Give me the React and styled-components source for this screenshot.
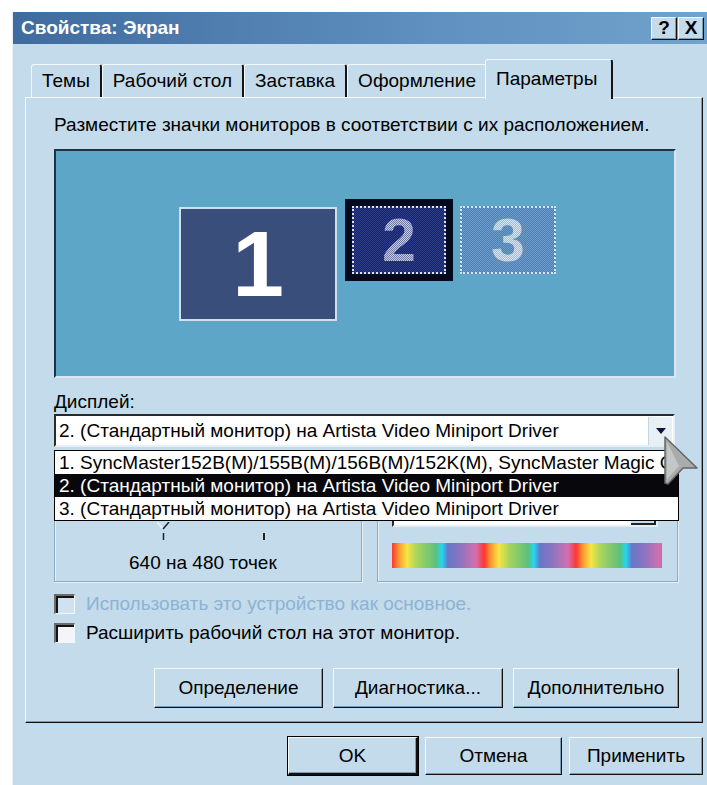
import React from 'react'
import styled, { createGlobalStyle } from 'styled-components'

const GlobalStyle = createGlobalStyle`
  html, body {
    margin: 0;
    padding: 0;
    background: #fff;
    overflow: hidden;
  }
  body {
    font-family: "Liberation Sans", Arial, sans-serif;
    font-size: 19px;
    color: #000;
  }
`

const tabs = ['Темы', 'Рабочий стол', 'Заставка', 'Оформление', 'Параметры']

const displays = [
  '1. SyncMaster152B(M)/155B(M)/156B(M)/152K(M), SyncMaster Magic CX700',
  '2. (Стандартный монитор) на Artista Video Miniport Driver',
  '3. (Стандартный монитор) на Artista Video Miniport Driver',
]

const App = () => {
  return (
    <Page>
      <GlobalStyle />
      <Window>
        <TitleBar>
          <Title>Свойства: Экран</Title>
          <TitleButton>?</TitleButton>
          <TitleButton>X</TitleButton>
        </TitleBar>

        <Body>
          <TabRow>
            {tabs.map((t, i) => (
              <Tab key={t} active={i === tabs.length - 1}>{t}</Tab>
            ))}
          </TabRow>

          <Panel>
            <Hint>Разместите значки мониторов в соответствии с их расположением.</Hint>

            <MonitorArea>
              <Monitor1>1</Monitor1>
              <Monitor2>
                <Monitor2Inner>
                  <DitherDigit light="#c4ccdc" dark="#6e7aa0">2</DitherDigit>
                </Monitor2Inner>
              </Monitor2>
              <Monitor3>
                <DitherDigit light="#d8e6f4" dark="#9dbbd9">3</DitherDigit>
              </Monitor3>
            </MonitorArea>

            <Label>Дисплей:</Label>
            <ComboWrap>
              <Combo>
                <ComboText>2. (Стандартный монитор) на Artista Video Miniport Driver</ComboText>
                <ComboButton>
                  <Arrow />
                </ComboButton>
              </Combo>

              <DropList>
                {displays.map((d, i) => (
                  <DropItem key={i} selected={i === 1}>{d}</DropItem>
                ))}
              </DropList>

              <Cursor width="40" height="52" viewBox="0 0 40 52">
                <path
                  d="M2 2 L34 33 L20 33 L5 49 L2 48 Z"
                  fill="#a9acac"
                  stroke="#666"
                  strokeWidth="1.5"
                  strokeLinejoin="round"
                />
                <path d="M4 7 L4 44 L16 31 Z" fill="#c4c7c7" />
              </Cursor>
            </ComboWrap>

            <Groups>
              <GroupBox>
                <SliderTicks>
                  <svg width="16" height="18" viewBox="0 0 16 18">
                    <path d="M1 0 L7 7" stroke="#eef5fa" strokeWidth="1.5" />
                    <path d="M13 0 L7 7" stroke="#222" strokeWidth="1.5" />
                    <path d="M7.5 11 V18" stroke="#222" strokeWidth="1.5" />
                  </svg>
                  <Tick />
                </SliderTicks>
                <Resolution>640 на 480 точек</Resolution>
              </GroupBox>

              <GroupBox>
                <ColorCombo>
                  <ColorComboButton />
                </ColorCombo>
                <ColorBar />
              </GroupBox>
            </Groups>

            <CheckRow disabled>
              <Checkbox disabled />
              Использовать это устройство как основное.
            </CheckRow>
            <CheckRow>
              <Checkbox />
              Расширить рабочий стол на этот монитор.
            </CheckRow>

            <ButtonRow>
              <Button w={169}>Определение</Button>
              <Button w={170}>Диагностика...</Button>
              <Button w={166}>Дополнительно</Button>
            </ButtonRow>
          </Panel>

          <DialogButtons>
            <Button w={130} h={38} primary>OK</Button>
            <Button w={137} h={38}>Отмена</Button>
            <Button w={134} h={38}>Применить</Button>
          </DialogButtons>
        </Body>
      </Window>
    </Page>
  )
}

export default App

const bg = '#c3dbea'

const Page = styled.div`
  width: 707px;
  height: 785px;
  overflow: hidden;
  padding: 12px 0 0 12px;
  box-sizing: border-box;
`

const Window = styled.div`
  width: 698px;
  height: 800px;
  background: ${bg};
  border-left: 1px solid #e4eff7;
  box-sizing: border-box;
  display: flex;
  flex-direction: column;
`

const TitleBar = styled.div`
  height: 32px;
  flex-shrink: 0;
  display: flex;
  align-items: center;
  gap: 1px;
  padding: 0 6px 0 8px;
  background: linear-gradient(to right, #3f6b9f, #5f90bf 60%, #72a3cd);
`

const Title = styled.div`
  flex: 1;
  color: #fff;
  font-weight: bold;
  font-size: 19px;
`

const raised = `
  border-top: 1px solid #f4f9fc;
  border-left: 1px solid #f4f9fc;
  border-right: 1px solid #111;
  border-bottom: 1px solid #111;
  box-shadow: inset -1px -1px 0 #7d9bb0;
`

const TitleButton = styled.div`
  width: 26px;
  height: 23px;
  box-sizing: border-box;
  ${raised}
  background: ${bg};
  display: flex;
  align-items: center;
  justify-content: center;
  font-weight: bold;
  font-size: 19px;
`

const Body = styled.div`
  display: flex;
  flex-direction: column;
  padding: 0 7px 0 12px;
`

const TabRow = styled.div`
  display: flex;
  align-items: flex-end;
  height: 38px;
  margin-top: 15px;
  padding-left: 6px;
  position: relative;
  z-index: 1;
`

const Tab = styled.div`
  height: ${({ active }) => (active ? '40px' : '33px')};
  box-sizing: border-box;
  display: flex;
  align-items: center;
  padding: ${({ active }) => (active ? '0 14px 2px 10px' : '0 10px')};
  margin: ${({ active }) => (active ? '0 0 -2px -3px' : '0')};
  background: ${bg};
  border-top: 1px solid #f2f8fb;
  border-left: 1px solid #f2f8fb;
  border-right: 2px solid #151515;
  border-radius: 3px 3px 0 0;
  position: relative;
  z-index: ${({ active }) => (active ? 2 : 0)};
  white-space: nowrap;
`

const Panel = styled.div`
  height: 626px;
  box-sizing: border-box;
  display: flex;
  flex-direction: column;
  padding: 16px 26px 0 28px;
  border-top: 1px solid #f2f8fb;
  border-left: 1px solid #f2f8fb;
  border-right: 1px solid #0e0e0e;
  border-bottom: 1px solid #0e0e0e;
  box-shadow: inset -1px -1px 0 #7d9bb0;
`

const Hint = styled.div`
  line-height: 22px;
  height: 22px;
  white-space: nowrap;
`

const MonitorArea = styled.div`
  position: relative;
  margin-top: 13px;
  height: 229px;
  box-sizing: border-box;
  background: #5ea6c7;
  border-top: 2px solid #1d3340;
  border-left: 2px solid #1d3340;
  border-right: 2px solid #d8e7f1;
  border-bottom: 2px solid #d8e7f1;
`

const Monitor1 = styled.div`
  position: absolute;
  left: 123px;
  top: 56px;
  width: 158px;
  height: 114px;
  box-sizing: border-box;
  background: #3a4e7c;
  border: 2px solid #cfe0ec;
  color: #fff;
  font-weight: bold;
  font-size: 93px;
  display: flex;
  align-items: center;
  justify-content: center;
`

const Monitor2 = styled.div`
  position: absolute;
  left: 289px;
  top: 48px;
  width: 108px;
  height: 82px;
  box-sizing: border-box;
  background: #050a1c;
  padding: 7px;
`

const dither = (a, b) => `
  background: repeating-conic-gradient(${a} 0 25%, ${b} 0 50%) 0 0 / 2px 2px;
`

const Monitor2Inner = styled.div`
  width: 100%;
  height: 100%;
  box-sizing: border-box;
  border: 2px dotted #dce4ee;
  ${dither('#16246a', '#2c3c86')}
  display: flex;
  align-items: center;
  justify-content: center;
`

const Monitor3 = styled.div`
  position: absolute;
  left: 404px;
  top: 55px;
  width: 96px;
  height: 68px;
  box-sizing: border-box;
  border: 2px dotted #d8e6f2;
  ${dither('#4f80b4', '#6c9ccc')}
  display: flex;
  align-items: center;
  justify-content: center;
`

const DitherDigit = styled.span`
  font-weight: bold;
  font-size: 61px;
  line-height: 1;
  color: transparent;
  background: repeating-conic-gradient(${({ light }) => light} 0 25%, ${({ dark }) => dark} 0 50%) 0 0 / 2px 2px;
  -webkit-background-clip: text;
  background-clip: text;
`

const Label = styled.div`
  margin-top: 13px;
  line-height: 22px;
  height: 22px;
`

const ComboWrap = styled.div`
  position: relative;
  margin-top: 1px;
`

const Combo = styled.div`
  width: 621px;
  height: 33px;
  box-sizing: border-box;
  background: #fff;
  border-top: 2px solid #2a2a2a;
  border-left: 2px solid #2a2a2a;
  border-right: 2px solid #e6eff5;
  border-bottom: 2px solid #e6eff5;
  display: flex;
  align-items: center;
`

const ComboText = styled.div`
  flex: 1;
  padding-left: 3px;
  white-space: nowrap;
  overflow: hidden;
`

const ComboButton = styled.div`
  width: 24px;
  height: 28px;
  margin-right: 1px;
  box-sizing: border-box;
  background: #e8f0f5;
  border-left: 1px solid #c5d6e2;
  display: flex;
  align-items: center;
  justify-content: center;
`

const Arrow = styled.div`
  width: 0;
  height: 0;
  border-left: 5px solid transparent;
  border-right: 5px solid transparent;
  border-top: 6px solid #10163a;
`

const DropList = styled.div`
  position: absolute;
  left: 0;
  top: 36px;
  width: 625px;
  box-sizing: border-box;
  background: #fff;
  border: 1px solid #000;
  z-index: 5;
`

const DropItem = styled.div`
  height: 23px;
  line-height: 23px;
  padding-left: 4px;
  white-space: nowrap;
  overflow: hidden;
  background: ${({ selected }) => (selected ? '#08080c' : '#fff')};
  color: ${({ selected }) => (selected ? '#fff' : '#000')};
`

const Cursor = styled.svg`
  position: absolute;
  left: 609px;
  top: 21px;
  z-index: 10;
`

const Groups = styled.div`
  display: grid;
  grid-template-columns: 308px 301px;
  gap: 15px;
  margin-top: 11px;
`

const GroupBox = styled.div`
  height: 124px;
  box-sizing: border-box;
  border: 1px solid #8aabc2;
  box-shadow: inset 1px 1px 0 #e6f0f7, 1px 1px 0 #e6f0f7;
  position: relative;
`

const SliderTicks = styled.div`
  display: flex;
  align-items: flex-end;
  justify-content: space-between;
  width: 108px;
  margin: 63px 0 0 101px;
  height: 18px;
`

const Tick = styled.div`
  width: 2px;
  height: 7px;
  background: #222;
  margin-right: -1px;
`

const Resolution = styled.div`
  padding-left: 74px;
  margin-top: 12px;
  line-height: 22px;
  white-space: nowrap;
`

const ColorCombo = styled.div`
  width: 266px;
  height: 30px;
  margin: 38px 0 0 14px;
  box-sizing: border-box;
  background: #fff;
  border-top: 2px solid #2a2a2a;
  border-left: 2px solid #2a2a2a;
  border-right: 2px solid #e6eff5;
  border-bottom: 2px solid #e6eff5;
  display: flex;
  justify-content: flex-end;
`

const ColorComboButton = styled.div`
  width: 25px;
  height: 100%;
  box-sizing: border-box;
  background: ${bg};
  border-right: 2px solid #222;
  border-bottom: 2px solid #222;
`

const ColorBar = styled.div`
  width: 270px;
  height: 25px;
  margin: 16px 0 0 14px;
  background: repeating-linear-gradient(
    90deg,
    #ff3535 0px,
    #ff9a30 7px,
    #f4e544 15px,
    #a8d45c 25px,
    #5cc07c 44px,
    #22d8f2 50px,
    #6676c8 56px,
    #8a74c0 68px,
    #d46fae 84px,
    #ff3535 92px
  );
`

const CheckRow = styled.div`
  display: flex;
  align-items: center;
  gap: 11px;
  height: 22px;
  margin-top: ${({ disabled }) => (disabled ? '11px' : '7px')};
  color: ${({ disabled }) => (disabled ? '#8db3d4' : '#000')};
  white-space: nowrap;
`

const Checkbox = styled.span`
  width: 21px;
  height: 20px;
  flex-shrink: 0;
  box-sizing: border-box;
  border-top: 2px solid #6c6c6c;
  border-left: 2px solid #6c6c6c;
  border-right: 1px solid #f2f7fa;
  border-bottom: 1px solid #f2f7fa;
  box-shadow: inset 2px 2px 0 #141414;
  background: ${({ disabled }) => (disabled ? '#cfe2ee' : '#f3f5f8')};
`

const ButtonRow = styled.div`
  display: flex;
  justify-content: flex-end;
  gap: 10px;
  margin: 24px -3px 0 0;
`

const Button = styled.div`
  width: ${({ w }) => w}px;
  height: ${({ h }) => h || 40}px;
  box-sizing: border-box;
  background: ${bg};
  ${raised}
  ${({ primary }) => primary && 'outline: 1px solid #000; outline-offset: 0; border-right-width: 2px; border-bottom-width: 2px;'}
  display: flex;
  align-items: center;
  justify-content: center;
  white-space: nowrap;
`

const DialogButtons = styled.div`
  display: flex;
  justify-content: flex-end;
  gap: 7px;
  margin-top: 14px;
`
